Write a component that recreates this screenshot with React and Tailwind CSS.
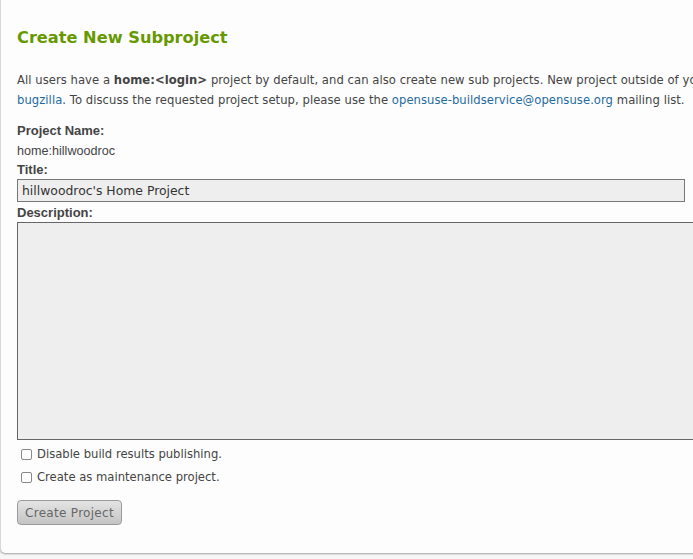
export default function App() {
  return (
    <div className="w-[693px] h-[559px] overflow-hidden bg-[#f6f6f6]">
      <div className="w-[720px] h-[553px] bg-[#fdfdfd] border-l border-[#d8d8d8] rounded-bl-[5px] shadow-[0_1px_2px_rgba(0,0,0,0.35)] pl-[16px] pt-[26px] text-[#444]">
        <h2 className="font-['DejaVu_Sans',sans-serif] font-bold text-[16.2px] leading-[24px] text-[#669900]">Create New Subproject</h2>
        <p className="mt-[20px] font-['DejaVu_Sans',sans-serif] text-[11.6px] leading-[20px] whitespace-nowrap tracking-[0.05px]">
          All users have a <b>home:&lt;login&gt;</b> project by default, and can also create new sub projects. New project outside of your home:
          <br />
          <a className="text-[#1f6ba0]">bugzilla</a>. To discuss the requested project setup, please use the <a className="text-[#1f6ba0]">opensuse-buildservice@opensuse.org</a> mailing list.
        </p>
        <div className="mt-[12px] font-['Liberation_Sans',sans-serif] text-[13px] font-bold leading-[18px]">Project Name:</div>
        <div className="mt-[2px] font-['Liberation_Sans',sans-serif] text-[12.6px] leading-[18px]">home:hillwoodroc</div>
        <div className="mt-[1px] font-['Liberation_Sans',sans-serif] text-[13px] font-bold leading-[18px]">Title:</div>
        <div className="w-[668px] h-[23px] border border-[#777] bg-[#eeeeee] px-[4px] font-['DejaVu_Sans',sans-serif] text-[12.4px] leading-[21px] text-[#333]">hillwoodroc's Home Project</div>
        <div className="mt-[2px] font-['Liberation_Sans',sans-serif] text-[13px] font-bold leading-[18px]">Description:</div>
        <div className="w-[700px] h-[218px] border border-[#666] bg-[#eeeeee]"></div>
        <div className="mt-[5px] ml-[4px] flex flex-col gap-[5px] font-['DejaVu_Sans',sans-serif] text-[11.6px] leading-[18px]">
          <label className="flex items-center gap-[5px]">
            <span className="w-[11px] h-[11px] rounded-[2px] border border-[#888] bg-white"></span>
            Disable build results publishing.
          </label>
          <label className="flex items-center gap-[5px]">
            <span className="w-[11px] h-[11px] rounded-[2px] border border-[#888] bg-white"></span>
            Create as maintenance project.
          </label>
        </div>
        <button className="mt-[14px] w-[105px] h-[25px] rounded-[4px] border border-[#9a9a9a] bg-gradient-to-b from-[#e4e4e4] to-[#c4c4c4] font-['DejaVu_Sans',sans-serif] text-[12px] text-[#666] tracking-[0.3px]">Create Project</button>
      </div>
    </div>
  );
}
